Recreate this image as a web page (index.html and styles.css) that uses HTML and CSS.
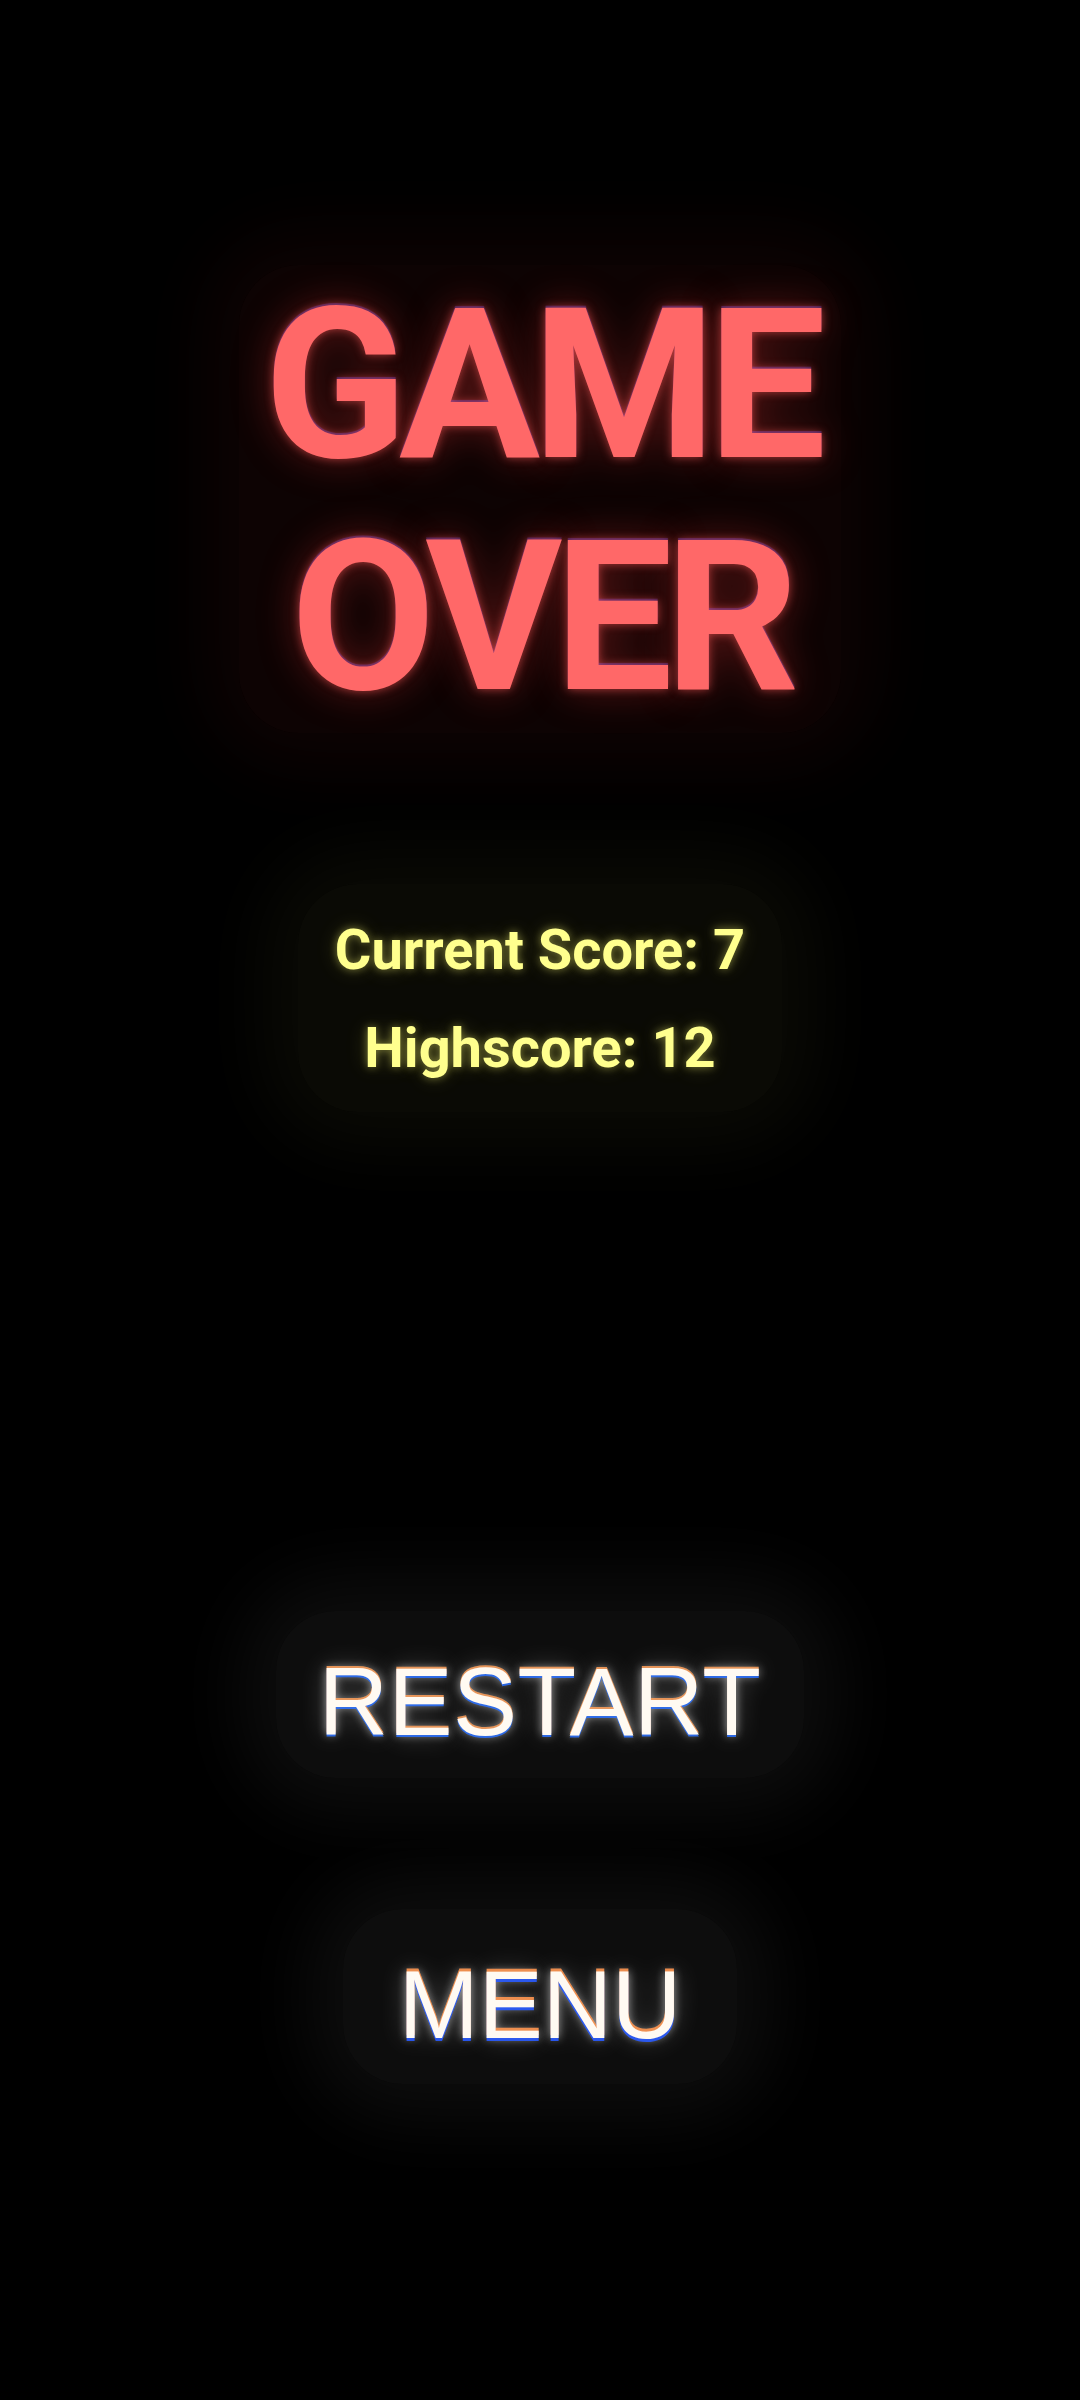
FILE: index.html
```html
<!DOCTYPE html>
<html lang="en">
<head>
<meta charset="utf-8">
<title>Game Over</title>
<link rel="stylesheet" href="styles.css">
</head>
<body>
<main class="screen">
  <section class="title-panel">
    <h1 class="title"><span class="title-line">GAME</span><span class="title-line">OVER</span></h1>
  </section>
  <section class="score-panel">
    <p class="score">Current Score: 7</p>
    <p class="score">Highscore: 12</p>
  </section>
  <button class="btn btn-restart" type="button">RESTART</button>
  <button class="btn btn-menu" type="button">MENU</button>
</main>
</body>
</html>
```
FILE: styles.css
```css
html, body {
  margin: 0;
  padding: 0;
  background: #000;
}

body {
  width: 1080px;
  height: 2400px;
  overflow: hidden;
}

.screen {
  display: flex;
  flex-direction: column;
  align-items: center;
  padding-top: 265px;
}

.title-panel {
  padding: 4px 23px 0 25px;
  background: rgba(255, 50, 50, 0.05);
  box-shadow: 0 0 70px 35px rgba(255, 50, 50, 0.05);
  border-radius: 60px;
}

.title {
  margin: 0;
  display: flex;
  flex-direction: column;
  align-items: center;
  font-family: Roboto, "Noto Sans", sans-serif;
  font-weight: 700;
  font-size: 210px;
  line-height: 232px;
  letter-spacing: -8px;
  color: #ff6868;
  text-shadow:
    0 -2px 1px rgba(150, 90, 255, 0.3),
    0 0 10px rgba(255, 90, 90, 0.6),
    0 0 40px rgba(255, 60, 60, 0.35);
}

.score-panel {
  margin-top: 151px;
  padding: 28px 37px 25px;
  display: flex;
  flex-direction: column;
  align-items: center;
  gap: 21px;
  background: rgba(255, 255, 120, 0.04);
  box-shadow: 0 0 70px 35px rgba(255, 255, 120, 0.04);
  border-radius: 60px;
}

.score {
  margin: 0;
  font-family: Roboto, "Noto Sans", sans-serif;
  font-weight: 700;
  font-size: 56px;
  line-height: 77px;
  color: #ffff8e;
  text-shadow:
    0 0 8px rgba(255, 255, 120, 0.45),
    0 0 22px rgba(255, 255, 100, 0.2);
  white-space: nowrap;
}

.btn {
  display: block;
  border: 0;
  margin: 0;
  font-family: "Liberation Sans", Arial, sans-serif;
  font-weight: 400;
  font-size: 96px;
  line-height: 109px;
  color: #fffaf2;
  background: rgba(255, 255, 255, 0.05);
  box-shadow: 0 0 70px 35px rgba(255, 255, 255, 0.05);
  border-radius: 60px;
  cursor: pointer;
}

.btn-restart {
  margin-top: 499px;
  padding: 36px 43px 22px;
  letter-spacing: 0.5px;
  text-shadow:
    0 -2px 0 rgba(255, 160, 90, 0.85),
    0 2px 0 rgba(40, 110, 255, 0.85),
    0 0 10px rgba(255, 255, 255, 0.6),
    0 0 26px rgba(255, 255, 255, 0.3);
}

.btn-menu {
  margin-top: 131px;
  padding: 41px 56px 25px;
  text-shadow:
    0 -3px 0 rgba(255, 150, 80, 0.9),
    0 3px 0 rgba(40, 90, 255, 0.9),
    0 0 10px rgba(255, 255, 255, 0.6),
    0 0 26px rgba(255, 255, 255, 0.3);
}
```
